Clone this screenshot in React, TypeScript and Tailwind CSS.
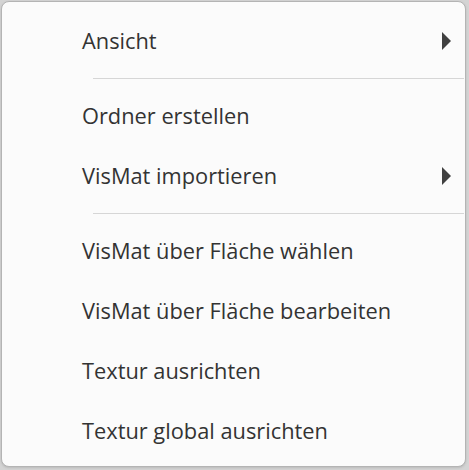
import { ReactNode } from 'react'

type Entry = { label: string; sub?: boolean } | 'sep'

const entries: Entry[] = [
  { label: 'Ansicht', sub: true },
  'sep',
  { label: 'Ordner erstellen' },
  { label: 'VisMat importieren', sub: true },
  'sep',
  { label: 'VisMat über Fläche wählen' },
  { label: 'VisMat über Fläche bearbeiten' },
  { label: 'Textur ausrichten' },
  { label: 'Textur global ausrichten' },
]

function SubArrow() {
  return (
    <svg width="9" height="18" viewBox="0 0 9 18" className="shrink-0">
      <path d="M0 0 L9 9 L0 18 Z" fill="#404040" />
    </svg>
  )
}

function MenuItem({ children, sub }: { children: ReactNode; sub?: boolean }) {
  return (
    <div className="h-[60px] flex items-center justify-between pl-[80px] pr-[14px] text-[21.8px] text-[#333333] hover:bg-[#f0f0f0]">
      <span>{children}</span>
      {sub && <SubArrow />}
    </div>
  )
}

export default function App() {
  return (
    <div className="w-[469px] h-[470px] bg-[#d4d4d4] pl-px pt-px pr-[3px] pb-[3px] font-['Segoe_UI','Open_Sans',sans-serif]">
      <div className="h-full rounded-[8px] border border-[#b4b4b4] bg-[#fbfbfb] pt-[9px] shadow-sm">
        {entries.map((e, i) =>
          e === 'sep' ? (
            <div key={i} className="h-[15px] flex items-center pl-[91px] pr-px">
              <div className="h-px w-full bg-[#d6d6d6]" />
            </div>
          ) : (
            <MenuItem key={i} sub={e.sub}>
              {e.label}
            </MenuItem>
          )
        )}
      </div>
    </div>
  )
}
